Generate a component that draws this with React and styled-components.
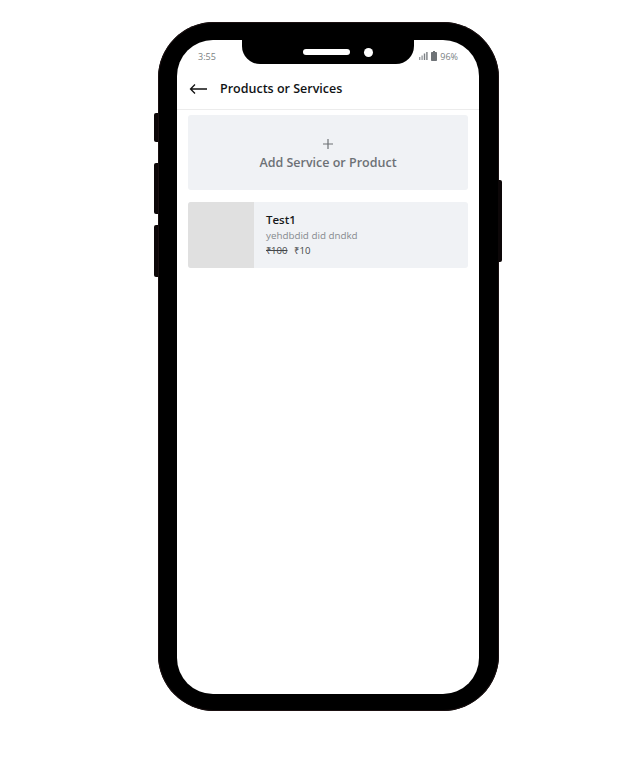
import React from "react";
import styled, { createGlobalStyle } from "styled-components";

const Global = createGlobalStyle`
  html, body { margin: 0; padding: 0; background: #fff; }
  body { font-family: "Open Sans", "Liberation Sans", sans-serif; }
`;

const Page = styled.div`
  width: 640px;
  height: 778px;
  padding: 22px 0 0 158px;
  box-sizing: border-box;
  overflow: hidden;
`;

const Phone = styled.div`
  position: relative;
  width: 341px;
  height: 689px;
  box-sizing: border-box;
  padding: 18px 20px 17px 19px;
  background: #000;
  border-radius: 56px;
  box-shadow: inset 0 0 0 1px #1a1011;
`;

const SideButton = styled.div`
  position: absolute;
  top: ${(p) => p.$top}px;
  height: ${(p) => p.$height}px;
  width: 4px;
  background: #0c0708;
  ${(p) => (p.$right ? "right: -3px; border-radius: 0 2px 2px 0;" : "left: -4px; border-radius: 2px 0 0 2px;")}
`;

const Screen = styled.div`
  position: relative;
  height: 100%;
  display: flex;
  flex-direction: column;
  background: #fff;
  border-radius: 36px;
  overflow: hidden;
`;

const Notch = styled.div`
  position: absolute;
  top: 0;
  left: 65px;
  width: 172px;
  height: 24px;
  display: flex;
  align-items: center;
  justify-content: center;
  gap: 14px;
  padding-left: 19px;
  box-sizing: border-box;
  background: #000;
  border-radius: 0 0 18px 18px;
`;

const Speaker = styled.div`
  width: 47px;
  height: 6px;
  border-radius: 3px;
  background: #fff;
`;

const Camera = styled.div`
  width: 9px;
  height: 9px;
  border-radius: 50%;
  background: #fff;
`;

const StatusBar = styled.div`
  height: 32px;
  flex: none;
  display: flex;
  align-items: center;
  justify-content: space-between;
  padding: 0 21px 0 21px;
  font-size: 9px;
  color: #7b7f83;
`;

const StatusIcons = styled.div`
  display: flex;
  align-items: center;
  gap: 3px;
`;

const Header = styled.div`
  height: 38px;
  flex: none;
  display: flex;
  align-items: center;
  gap: 12px;
  padding: 0 0 4px 12px;
  box-sizing: border-box;
  border-bottom: 1px solid #ececec;
`;

const Title = styled.div`
  font-size: 12.5px;
  font-weight: 600;
  color: #111315;
`;

const List = styled.div`
  display: flex;
  flex-direction: column;
  gap: 12px;
  padding: 5px 11px 0;
`;

const AddCard = styled.div`
  height: 75px;
  display: flex;
  flex-direction: column;
  align-items: center;
  justify-content: center;
  gap: 5px;
  padding-top: 6px;
  box-sizing: border-box;
  background: #f0f2f5;
  border-radius: 3px;
  color: #6d7175;
`;

const AddLabel = styled.div`
  font-size: 12.5px;
  font-weight: 600;
  line-height: 18px;
`;

const ItemCard = styled.div`
  height: 66px;
  display: flex;
  background: #f0f2f5;
  border-radius: 3px;
  overflow: hidden;
`;

const Thumb = styled.div`
  width: 66px;
  flex: none;
  background: #e0e0e0;
`;

const ItemBody = styled.div`
  display: flex;
  flex-direction: column;
  justify-content: center;
  padding: 0 0 0 12px;
`;

const ItemName = styled.div`
  font-size: 11.5px;
  font-weight: 600;
  line-height: 15px;
  margin-bottom: 1px;
  color: #17191b;
`;

const ItemDesc = styled.div`
  font-size: 9.8px;
  line-height: 15px;
  color: #85898d;
`;

const Prices = styled.div`
  display: flex;
  gap: 7px;
  font-size: 9.6px;
  line-height: 15px;
  color: #44474a;
`;

const OldPrice = styled.span`
  text-decoration: line-through;
`;

export default function App() {
  return (
    <Page>
      <Global />
      <Phone>
        <SideButton $top={91} $height={29} />
        <SideButton $top={141} $height={51} />
        <SideButton $top={203} $height={52} />
        <SideButton $right $top={158} $height={82} />
        <Screen>
          <Notch>
            <Speaker />
            <Camera />
          </Notch>
          <StatusBar>
            <span>3:55</span>
            <StatusIcons>
              <svg width="9" height="8" viewBox="0 0 9 8" aria-hidden="true">
                <rect x="0" y="5" width="1.4" height="3" fill="#9a9ea2" />
                <rect x="2.4" y="3.5" width="1.4" height="4.5" fill="#9a9ea2" />
                <rect x="4.8" y="1.5" width="1.4" height="6.5" fill="#7b7f83" />
                <rect x="7.2" y="0" width="1.4" height="8" fill="#7b7f83" />
              </svg>
              <svg width="6" height="10" viewBox="0 0 6 10" aria-hidden="true">
                <path d="M2 0h2v1h1.2a.8.8 0 0 1 .8.8v7.4a.8.8 0 0 1-.8.8H.8a.8.8 0 0 1-.8-.8V1.800a.8.8 0 0 1 .8-.8H2z" fill="#6f7377" />
              </svg>
              <span>96%</span>
            </StatusIcons>
          </StatusBar>
          <Header>
            <svg width="19" height="12" viewBox="0 0 19 12" fill="none" stroke="#111" strokeWidth="1.3" aria-hidden="true">
              <path d="M18 6H1.500M6 1.500 1.500 6 6 10.500" />
            </svg>
            <Title>Products or Services</Title>
          </Header>
          <List>
            <AddCard>
              <svg width="10" height="10" viewBox="0 0 10 10" stroke="#6d7175" strokeWidth="1.2" aria-hidden="true">
                <path d="M5 0v10M0 5h10" />
              </svg>
              <AddLabel>Add Service or Product</AddLabel>
            </AddCard>
            <ItemCard>
              <Thumb />
              <ItemBody>
                <ItemName>Test1</ItemName>
                <ItemDesc>yehdbdid did dndkd</ItemDesc>
                <Prices>
                  <OldPrice>₹100</OldPrice>
                  <span>₹10</span>
                </Prices>
              </ItemBody>
            </ItemCard>
          </List>
        </Screen>
      </Phone>
    </Page>
  );
}
